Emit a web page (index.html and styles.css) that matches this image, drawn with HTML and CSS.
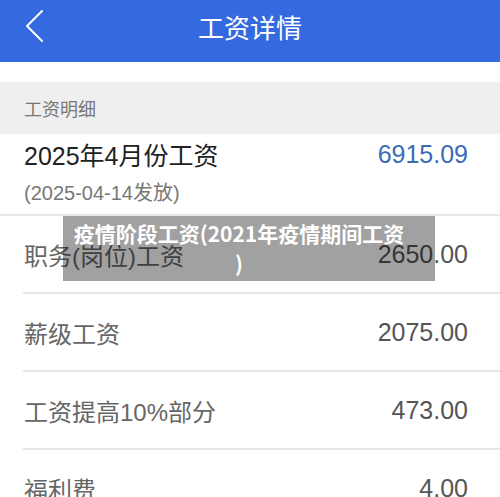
FILE: index.html
```html
<!DOCTYPE html>
<html lang="zh-CN">
<head>
<meta charset="utf-8">
<title>工资详情</title>
<link rel="stylesheet" href="styles.css">
</head>
<body>
<div class="page">
  <header class="topbar">
    <svg class="back" width="20" height="36" viewBox="0 0 20 36"><polyline points="17,3 2,18 17,33" fill="none" stroke="#fff" stroke-width="2" stroke-linecap="round" stroke-linejoin="round"/></svg>
    <h1 class="title">工资详情</h1>
  </header>
  <div class="spacer"></div>
  <div class="section-head">工资明细</div>
  <div class="summary">
    <div class="summary-line">
      <span class="summary-name">2025年4月份工资</span>
      <span class="summary-amount">6915.09</span>
    </div>
    <div class="summary-date">(2025-04-14发放)</div>
  </div>
  <ul class="items">
    <li class="item"><span class="label">职务(岗位)工资</span><span class="value">2650.00</span></li>
    <li class="item"><span class="label">薪级工资</span><span class="value">2075.00</span></li>
    <li class="item"><span class="label">工资提高10%部分</span><span class="value">473.00</span></li>
    <li class="item"><span class="label">福利费</span><span class="value">4.00</span></li>
  </ul>
  <div class="caption">疫情阶段工资(2021年疫情期间工资<br>)</div>
</div>
</body>
</html>
```

FILE: styles.css
```css
* { box-sizing: border-box; }
html, body { margin: 0; padding: 0; }
body {
  font-family: "Liberation Sans", "Noto Sans CJK SC", sans-serif;
  background: #fff;
  overflow: hidden;
}
.page {
  position: relative;
  width: 500px;
  height: 497px;
  overflow: hidden;
}
.topbar {
  height: 62px;
  background: #3569df;
  display: flex;
  align-items: center;
  justify-content: center;
  position: relative;
}
.back {
  position: absolute;
  left: 25px;
  top: 8px;
}
.title {
  margin: 0 0 8px;
  font-family: "Noto Sans CJK SC", sans-serif;
  font-weight: 400;
  font-size: 26px;
  color: #fff;
  line-height: 36px;
}
.spacer { height: 20px; }
.section-head {
  height: 52px;
  background: #efefef;
  padding-left: 24px;
  display: flex;
  align-items: center;
  font-size: 18px;
  color: #777;
  font-family: "Noto Sans CJK SC", sans-serif;
}
.summary {
  height: 82px;
  border-bottom: 2px solid #e8e8e8;
  padding: 1px 32px 0 24px;
}
.summary-line {
  display: flex;
  justify-content: space-between;
  align-items: center;
  height: 38px;
}
.summary-name { font-size: 25px; color: #222; }
.summary-amount { font-size: 25px; color: #3a6bb8; }
.summary-date {
  font-size: 20px;
  color: #777;
  line-height: 40px;
}
.items {
  list-style: none;
  margin: 0;
  padding: 0 0 0 23px;
}
.item {
  height: 78px;
  border-bottom: 2px solid #e6e6e6;
  display: flex;
  justify-content: space-between;
  align-items: center;
  padding: 0 32px 0 1px;
}
.label { font-size: 24px; color: #666; }
.value { font-size: 25px; color: #555; }
.caption {
  position: absolute;
  left: 63px;
  top: 216px;
  width: 372px;
  height: 65px;
  background: rgba(0, 0, 0, 0.37);
  color: #fff;
  font-weight: 700;
  font-size: 21px;
  line-height: 30px;
  text-align: center;
  padding: 2px 24px 0 4px;
  font-family: "Noto Sans CJK SC", sans-serif;
}
```
